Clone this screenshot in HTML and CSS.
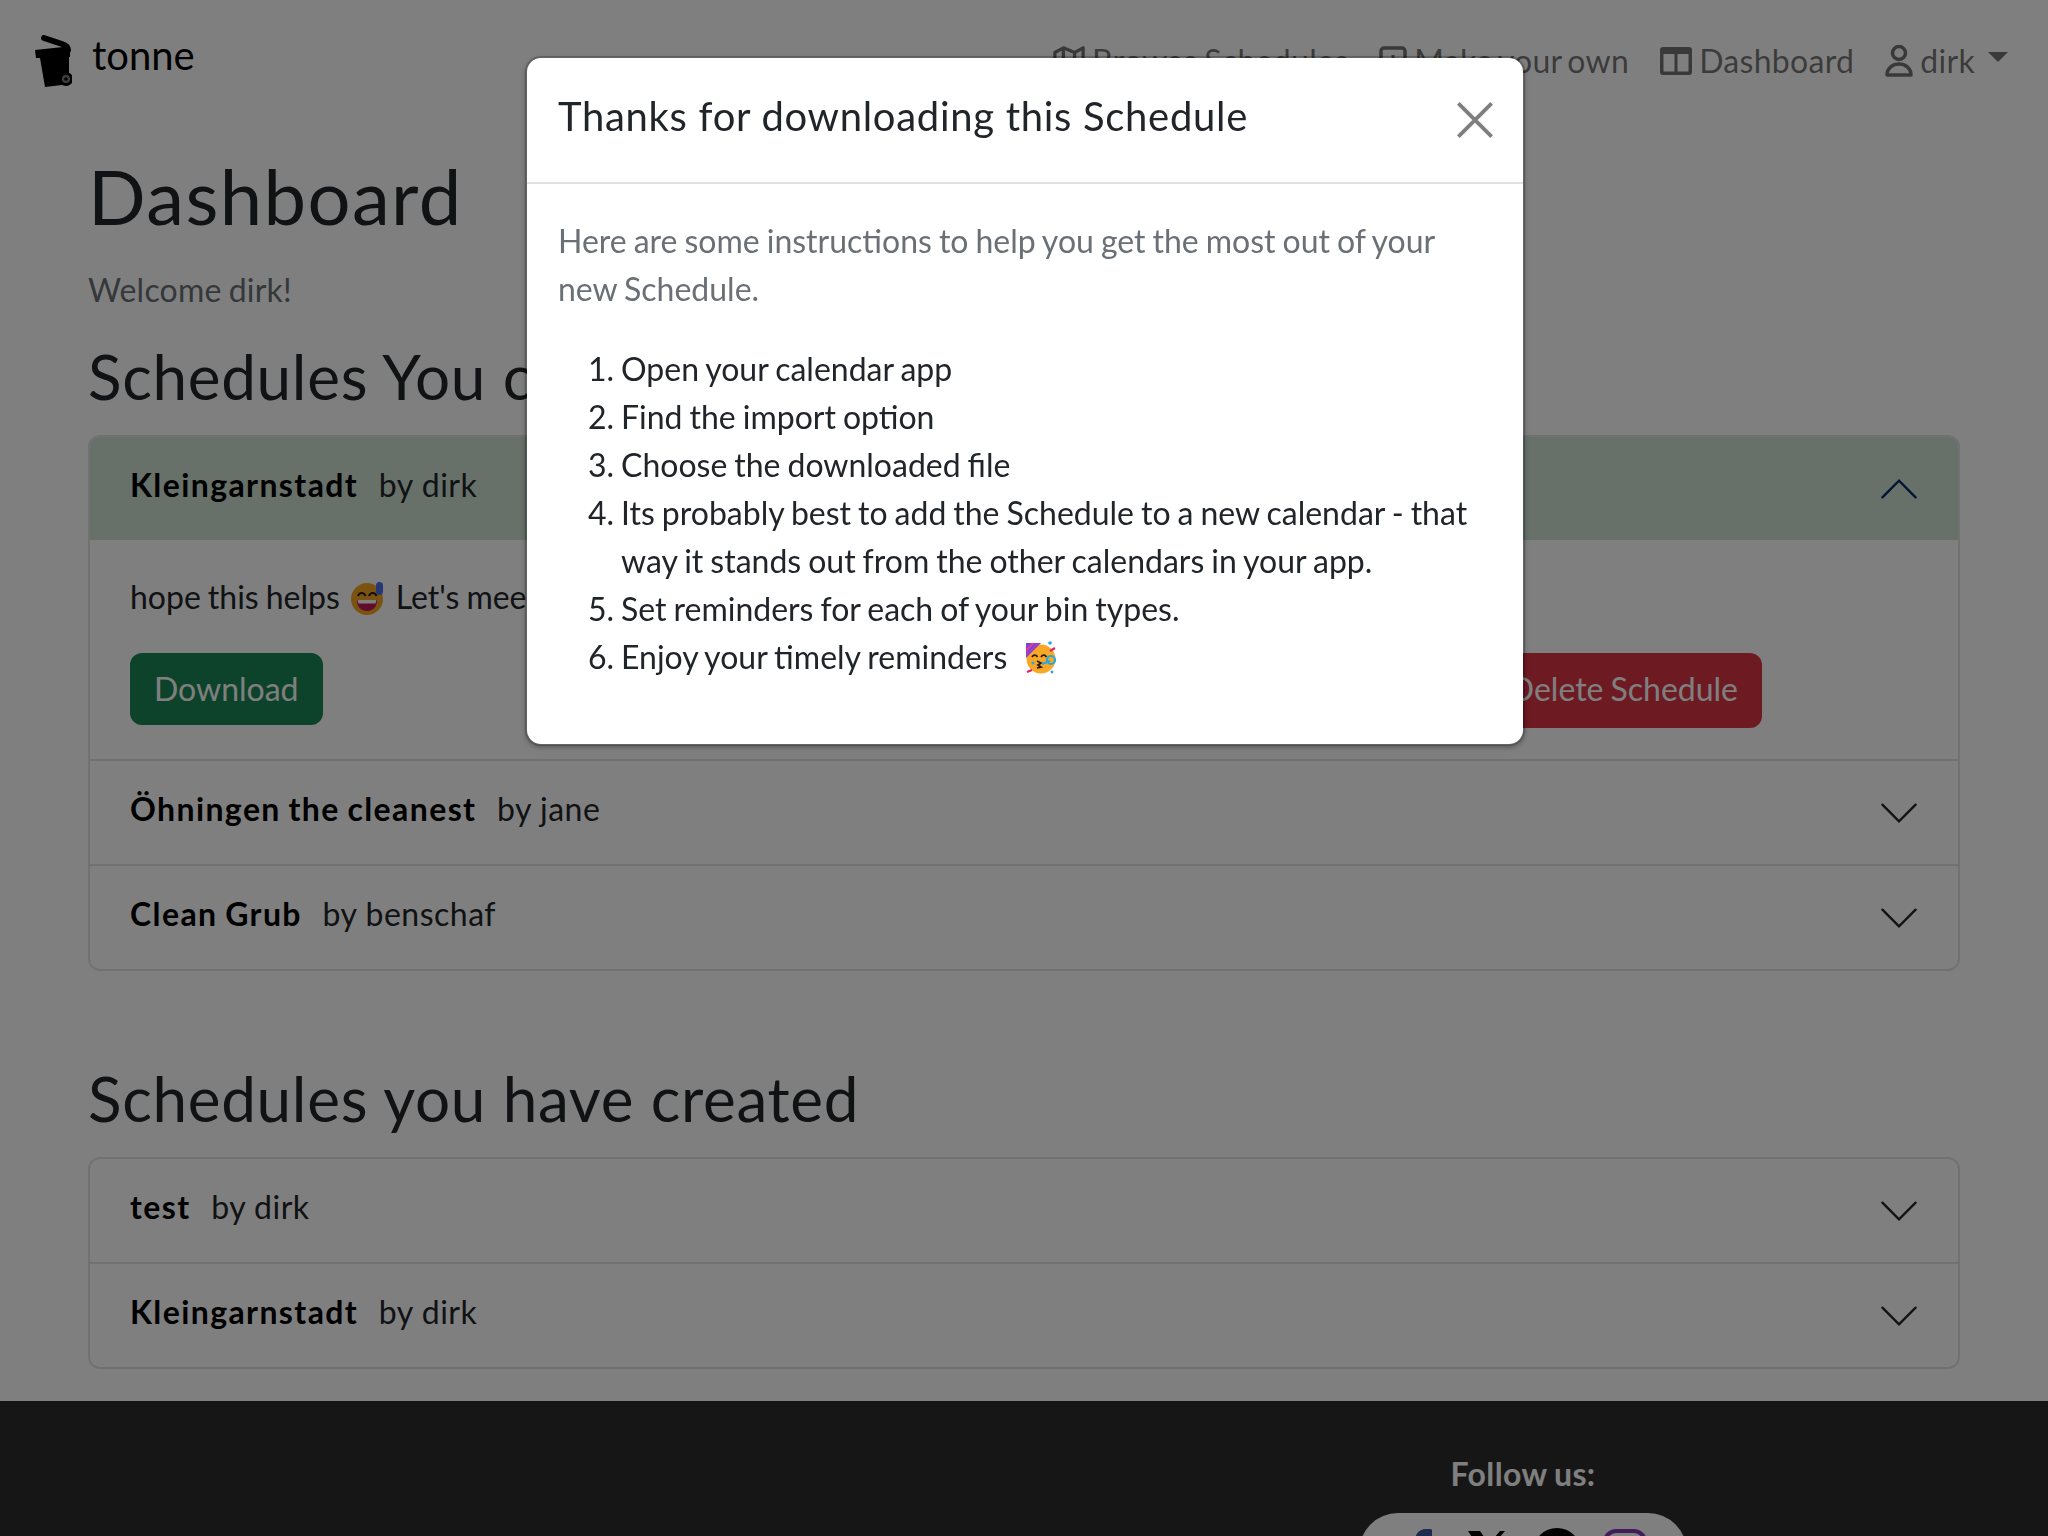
FILE: index.html
```html
<!DOCTYPE html>
<html lang="en">
<head>
  <meta charset="UTF-8">
  <meta name="viewport" content="width=device-width, initial-scale=1.0">
  <title>tonne</title>
  <link rel="stylesheet" href="styles.css">
</head>
<body>
  <!-- Navbar -->
  <nav class="navbar">
    <a class="brand" href="#">
      <svg class="brand-logo" viewBox="0 0 37 52" width="37" height="52">
        <path d="M9 3 L27 9 Q33 11 33 15" fill="none" stroke="#000" stroke-width="6" stroke-linecap="round"/>
        <path d="M0 15 L28 12 L35 13 L35 22 L34 22 L34 42 L27 50 L10 52 L5 23 L1 23 Z" fill="#000"/>
        <circle cx="31" cy="44" r="7" fill="#000"/>
        <circle cx="31" cy="44" r="4" fill="#808080"/>
        <circle cx="31" cy="44" r="1.800" fill="#000"/>
      </svg>
      <span>tonne</span>
    </a>
    <ul class="nav-links">
      <li>
        <svg class="nav-icon" viewBox="0 0 34 32"><path fill="none" stroke="currentColor" stroke-width="3.500" stroke-linejoin="round" d="M2 7 11 2l12 5 9-5v24l-9 5-12-5-9 5zM11 2v24M23 7v24"/></svg>
        Browse Schedules
      </li>
      <li>
        <svg class="nav-icon nav-icon-square" viewBox="0 0 28 30"><rect x="2" y="2" width="24" height="26" rx="3" fill="none" stroke="currentColor" stroke-width="3.500"/><path d="M14 9v12M8 15h12" stroke="currentColor" stroke-width="3"/></svg>
        Make your own
      </li>
      <li>
        <svg class="nav-icon" viewBox="0 0 32 32"><path fill="currentColor" fill-rule="evenodd" d="M3 2h26a3 3 0 0 1 3 3v22a3 3 0 0 1-3 3H3a3 3 0 0 1-3-3V5a3 3 0 0 1 3-3zM3.500 9v17.500h11V9zm14 0v17.500h11V9z"/></svg>
        Dashboard
      </li>
      <li>
        <svg class="nav-icon-person" viewBox="2 0 28 34"><circle cx="16" cy="9" r="6.500" fill="none" stroke="currentColor" stroke-width="3.500"/><path d="M4 31C4 24 10 20 16 20s12 4 12 11z" fill="none" stroke="currentColor" stroke-width="3.500" stroke-linejoin="round"/></svg>
        dirk
        <span class="caret"></span>
      </li>
    </ul>
  </nav>

  <main class="container">
    <h1>Dashboard</h1>
    <p class="muted welcome">Welcome dirk!</p>

    <h2>Schedules You currently use</h2>
    <div class="accordion">
      <div class="accordion-item">
        <div class="accordion-header active">
          <span><b>Kleingarnstadt</b> by dirk</span>
          <svg class="chevron" viewBox="0 0 16 16"><path fill="none" stroke="#052c65" stroke-width="1" stroke-linecap="round" d="M1 11.500l7-7 7 7"/></svg>
        </div>
        <div class="accordion-body">
          <p>hope this helps
            <svg class="emoji" viewBox="0 0 34 34">
              <circle cx="17" cy="18" r="16" fill="#f5a623"/>
              <path d="M7 19h20c0 7-4 11-10 11S7 26 7 19z" fill="#c2185b"/>
              <path d="M7.500 19h19l-1 3.500h-17z" fill="#fff"/>
              <path d="M8 15c1.500-4 6-4 7.500 0M19 15c1.500-4 6-4 7.500 0" fill="none" stroke="#2b1a12" stroke-width="2"/>
              <rect x="26" y="1" width="7" height="13" rx="3.500" fill="#4a6fe8"/>
            </svg>
            Let's meet up
          </p>
          <div class="body-actions">
            <a class="btn btn-success">Download</a>
            <a class="btn btn-danger">Delete Schedule</a>
          </div>
        </div>
      </div>
      <div class="accordion-item">
        <div class="accordion-header">
          <span><b>Öhningen the cleanest</b> by jane</span>
          <svg class="chevron" viewBox="0 0 16 16"><path fill="none" stroke="#212529" stroke-width="1" stroke-linecap="round" d="M1 4.500l7 7 7-7"/></svg>
        </div>
      </div>
      <div class="accordion-item">
        <div class="accordion-header">
          <span><b>Clean Grub</b> by benschaf</span>
          <svg class="chevron" viewBox="0 0 16 16"><path fill="none" stroke="#212529" stroke-width="1" stroke-linecap="round" d="M1 4.500l7 7 7-7"/></svg>
        </div>
      </div>
    </div>

    <h2 class="created">Schedules you have created</h2>
    <div class="accordion">
      <div class="accordion-item">
        <div class="accordion-header">
          <span><b>test</b> by dirk</span>
          <svg class="chevron" viewBox="0 0 16 16"><path fill="none" stroke="#212529" stroke-width="1" stroke-linecap="round" d="M1 4.500l7 7 7-7"/></svg>
        </div>
      </div>
      <div class="accordion-item">
        <div class="accordion-header">
          <span><b>Kleingarnstadt</b> by dirk</span>
          <svg class="chevron" viewBox="0 0 16 16"><path fill="none" stroke="#212529" stroke-width="1" stroke-linecap="round" d="M1 4.500l7 7 7-7"/></svg>
        </div>
      </div>
    </div>
  </main>

  <!-- Footer -->
  <footer class="footer">
    <div class="follow">
      <p>Follow us:</p>
      <div class="socials">
        <svg viewBox="0 0 48 48" width="48" height="48"><path fill="#3b5998" d="M18 48V27h-7v-8h7v-6C18 6 22 1 29 1c3 0 5 0 6 .4v8h-4c-3 0-4 1.600-4 4V19h8l-1 8h-7v21z"/></svg>
        <svg viewBox="0 0 48 48" width="48" height="48"><path fill="#000" d="M3 3h12l9 13L35 3h5L26 19l15 25H29L20 30 8 44H3l15-18z"/></svg>
        <svg viewBox="0 0 48 48" width="48" height="48"><circle cx="24" cy="24" r="24" fill="#000"/></svg>
        <svg viewBox="0 0 48 48" width="48" height="48"><rect x="4" y="3" width="40" height="42" rx="11" fill="none" stroke="#833ab4" stroke-width="4"/></svg>
      </div>
    </div>
  </footer>

  <div class="backdrop"></div>

  <!-- Download modal -->
  <div class="modal">
    <div class="modal-header">
      <h5>Thanks for downloading this Schedule</h5>
      <svg class="close" viewBox="0 0 16 16"><path fill="none" stroke="#000" stroke-width="1.600" d="M1 1l14 14M15 1L1 15"/></svg>
    </div>
    <div class="modal-body">
      <p class="muted">Here are some instructions to help you get the most out of your new Schedule.</p>
      <ol>
        <li>Open your calendar app</li>
        <li>Find the import option</li>
        <li>Choose the downloaded file</li>
        <li>Its probably best to add the Schedule to a new calendar - that way it stands out from the other calendars in your app.</li>
        <li>Set reminders for each of your bin types.</li>
        <li>Enjoy your timely reminders
          <svg class="emoji" viewBox="0 0 34 34">
            <circle cx="17" cy="19" r="14.500" fill="#f9a825"/>
            <path d="M2 3h15L2 18z" fill="#7e3fe0"/>
            <path d="M2 9l6-6h3L2 12zM2 15l12-12h1L2 16z" fill="#e0408a"/>
            <path d="M8 17c1.500-2.500 4-2.500 5.500 0M17 17c1.500-2.500 4-2.500 5.500 0" fill="none" stroke="#2b1a12" stroke-width="1.800"/>
            <path d="M13 21l4 2-3 2 3 2-4 1" fill="none" stroke="#2b1a12" stroke-width="1.800"/>
            <circle cx="27" cy="20" r="4" fill="none" stroke="#2aa7e0" stroke-width="2.200"/>
            <path d="M18 24l8-3" stroke="#2aa7e0" stroke-width="2.200"/>
            <circle cx="26" cy="3" r="1.800" fill="#2aa7e0"/>
            <circle cx="9" cy="23" r="1.500" fill="#2aa7e0"/>
            <circle cx="28" cy="32" r="1.400" fill="#2aa7e0"/>
            <path d="M26 11l5-3M3 32l5-2" stroke="#e0246e" stroke-width="2.200"/>
          </svg>
        </li>
      </ol>
    </div>
  </div>
</body>
</html>
```

FILE: styles.css
```css
/* General Styles */
html,
body {
  height: 1536px;
  overflow: hidden;
}

body {
  font-family: 'Lato', sans-serif;
  font-size: 32px;
  line-height: 48px;
  word-spacing: -1.2px;
  color: #212529;
  background-color: #fff;
  margin: 0;
}

p {
  margin: 0;
}

b {
  font-weight: 700;
}

.muted {
  color: #6a7076;
}

/* Navbar */
.navbar {
  display: flex;
  justify-content: space-between;
  align-items: flex-start;
  padding: 32px 40px 0 35px;
  height: 112px;
  box-sizing: border-box;
}

.brand {
  display: flex;
  gap: 20px;
  font-size: 40px;
  line-height: 46px;
  color: #000;
  text-decoration: none;
}

.brand-logo {
  margin-top: 3px;
}

.nav-links {
  display: flex;
  gap: 31px;
  list-style: none;
  margin: 0;
  padding: 5px 0 0;
  letter-spacing: 0.3px;
  word-spacing: -3px;
  color: rgba(0, 0, 0, 0.55);
}

.nav-links li {
  display: flex;
  align-items: center;
  gap: 7px;
}

.nav-icon {
  width: 32px;
  height: 32px;
}

.nav-icon-square {
  width: 28px;
}

.nav-icon-person {
  width: 28px;
  height: 34px;
}

.caret {
  width: 0;
  height: 0;
  margin-left: 6px;
  margin-top: -8px;
  border-top: 10px solid rgba(0, 0, 0, 0.55);
  border-left: 10px solid transparent;
  border-right: 10px solid transparent;
}

/* Main content */
.container {
  padding: 36px 88px 0;
}

h1,
h2,
h5 {
  font-family: 'Lato', sans-serif;
  font-weight: 400;
  word-spacing: 0;
  margin: 0;
}

h1 {
  font-size: 76px;
  line-height: 96px;
  letter-spacing: 1.4px;
}

.welcome {
  margin-top: 22px;
  letter-spacing: 0.2px;
}

h2 {
  font-size: 62px;
  line-height: 77px;
  margin-top: 24px;
  letter-spacing: 0.7px;
}

h2.created {
  margin-top: 89px;
}

/* Accordion */
.accordion {
  margin-top: 20px;
  border: 2px solid #dee2e6;
  border-radius: 12px;
  overflow: hidden;
}

.accordion-item + .accordion-item {
  border-top: 2px solid #dee2e6;
}

.accordion-header {
  display: flex;
  justify-content: space-between;
  align-items: center;
  height: 103px;
  padding: 0 40px;
  letter-spacing: 0.5px;
  word-spacing: 0;
  color: #212529;
}

.accordion-header span {
  margin-bottom: 7px;
}

.accordion-header b {
  color: #000;
  letter-spacing: 1.4px;
  word-spacing: -1.5px;
  margin-right: 12px;
}

.accordion-header.active {
  background-color: #cfe2d5;
}

.chevron {
  width: 38px;
  height: 38px;
}

.accordion-body {
  padding: 33px 40px 31px;
}

.body-actions {
  display: flex;
  justify-content: space-between;
  align-items: flex-start;
  margin-top: 32px;
  padding-right: 156px;
}

.emoji {
  width: 34px;
  height: 34px;
  vertical-align: -6px;
  margin: 0 5px 0 3px;
}

/* Buttons */
.btn {
  display: block;
  padding: 12px 24px;
  border-radius: 12px;
  color: #fff;
}

.btn-success {
  background-color: #198754;
}

.btn-danger {
  padding-bottom: 15px;
  background-color: #dc3545;
}

/* Footer */
.footer {
  position: fixed;
  top: 1401px;
  left: 0;
  right: 0;
  height: 300px;
  display: flex;
  justify-content: flex-end;
  padding-right: 64px;
  background-color: #2c2c2c;
  color: #fff;
}

.follow {
  width: 922px;
  text-align: center;
  padding-top: 49px;
}

.follow p {
  font-weight: 700;
  letter-spacing: 0.4px;
}

.socials {
  display: inline-flex;
  gap: 20px;
  align-items: flex-start;
  margin-top: 15px;
  padding: 15px 38px;
  border-radius: 48px;
  background-color: #fff;
}

/* Modal */
.backdrop {
  position: fixed;
  inset: 0;
  background-color: rgba(0, 0, 0, 0.5);
}

.modal {
  position: fixed;
  top: 56px;
  left: 525px;
  width: 1000px;
  box-sizing: border-box;
  background: #fff;
  border: 2px solid rgba(0, 0, 0, 0.2);
  border-radius: 16px;
  background-clip: padding-box;
  box-shadow: 0 2px 4px rgba(0, 0, 0, 0.25);
}

.modal-header {
  display: flex;
  justify-content: space-between;
  align-items: center;
  height: 126px;
  box-sizing: border-box;
  padding: 0 31px;
  border-bottom: 2px solid #dee2e6;
}

.modal-header h5 {
  font-size: 40px;
  line-height: 48px;
  letter-spacing: 0.7px;
  margin-bottom: 8px;
  color: #212529;
}

.close {
  width: 38px;
  height: 38px;
  margin-right: -2px;
  opacity: 0.5;
}

.modal-body {
  padding: 33px 31px 63px;
}

.modal-body ol {
  margin: 32px 0 0;
  padding-left: 63px;
}

.modal-body .emoji {
  vertical-align: -5px;
  margin-left: 10px;
}
```
